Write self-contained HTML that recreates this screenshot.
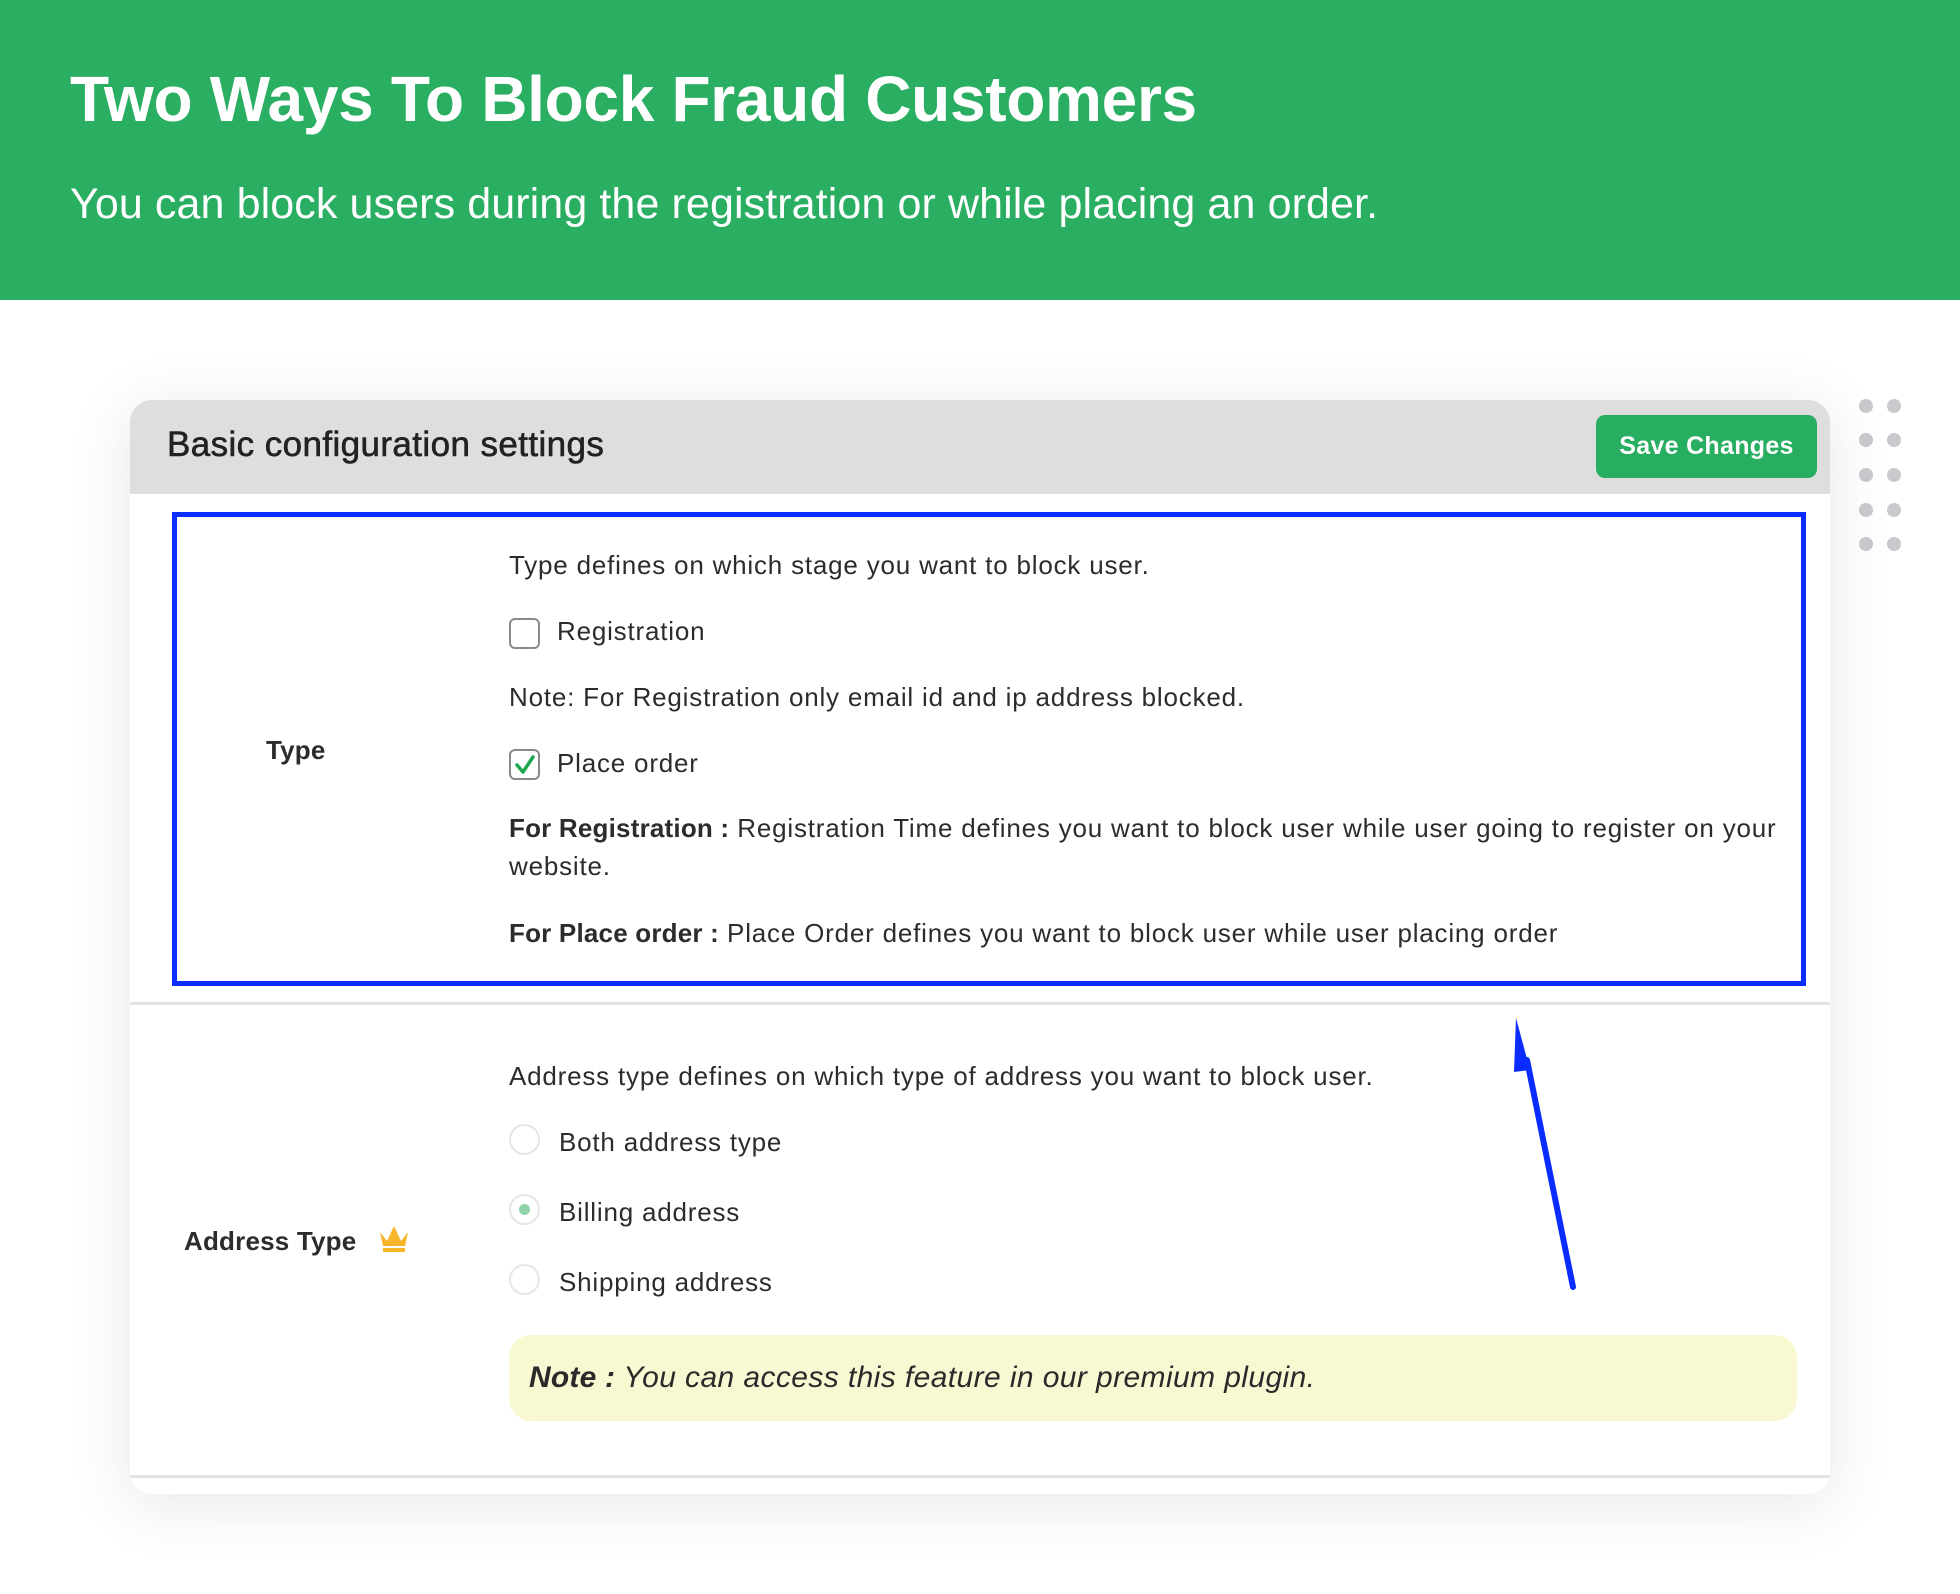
<!DOCTYPE html>
<html><head><meta charset="utf-8"><style>
*{margin:0;padding:0;box-sizing:border-box}
body{width:1960px;height:1594px;background:#fff;position:relative;overflow:hidden;font-family:"Liberation Sans",sans-serif;color:#2c2c2c}
.hdr{position:absolute;left:0;top:0;width:1960px;height:300px;background:#29ae62}
.h1{position:absolute;left:70px;top:62px;font-size:64px;font-weight:bold;color:#fff;letter-spacing:-0.3px;white-space:nowrap}
.h2{position:absolute;left:70px;top:180px;font-size:43px;color:#fff;white-space:nowrap;letter-spacing:0.1px}
.card{position:absolute;left:130px;top:400px;width:1700px;height:1094px;background:#fff;border-radius:22px;box-shadow:0 10px 60px rgba(60,70,100,0.13);overflow:hidden}
.chead{position:absolute;left:0;top:0;width:1700px;height:94px;background:#dedede}
.ctitle{position:absolute;left:37px;top:25px;font-size:35px;color:#222;white-space:nowrap;-webkit-text-stroke:0.6px #222;letter-spacing:0.4px}
.btn{position:absolute;left:1466px;top:15px;width:221px;height:63px;background:#28ae60;border-radius:9px;color:#fff;font-weight:bold;font-size:25px;text-align:center;line-height:63px;letter-spacing:0.3px}
.t{position:absolute;font-size:26px;letter-spacing:0.8px;white-space:nowrap;color:#2c2c2c}
.b{font-weight:bold;letter-spacing:0.2px}
.blue{position:absolute;left:172px;top:512px;width:1634px;height:474px;border:5px solid #0a2cff}
.cb{position:absolute;width:31px;height:31px;border:2px solid #8a8a8a;border-radius:6px;background:#fff}
.rd{position:absolute;width:31px;height:31px;border:2px solid #e6e6e6;border-radius:50%;background:#fff}
.line{position:absolute;left:130px;width:1700px;height:3px;background:#e2e2e2}
.note{position:absolute;left:509px;top:1335px;width:1288px;height:86px;background:#f8f9d2;border-radius:22px}
.dot{position:absolute;width:14px;height:14px;border-radius:50%;background:#c9cace}
</style></head><body>
<div class="hdr"></div>
<div class="h1">Two Ways To Block Fraud Customers</div>
<div class="h2">You can block users during the registration or while placing an order.</div>

<div class="dot" style="left:1859px;top:399px"></div><div class="dot" style="left:1887px;top:399px"></div>
<div class="dot" style="left:1859px;top:433px"></div><div class="dot" style="left:1887px;top:433px"></div>
<div class="dot" style="left:1859px;top:468px"></div><div class="dot" style="left:1887px;top:468px"></div>
<div class="dot" style="left:1859px;top:503px"></div><div class="dot" style="left:1887px;top:503px"></div>
<div class="dot" style="left:1859px;top:537px"></div><div class="dot" style="left:1887px;top:537px"></div>

<div class="card">
 <div class="chead"><div class="ctitle">Basic configuration settings</div><div class="btn">Save Changes</div></div>
</div>
<div class="blue"></div>
<div class="t b" style="left:266px;top:735px">Type</div>
<div class="t" style="left:509px;top:550px">Type defines on which stage you want to block user.</div>
<div class="cb" style="left:509px;top:618px"></div>
<div class="t" style="left:557px;top:616px">Registration</div>
<div class="t" style="left:509px;top:682px">Note: For Registration only email id and ip address blocked.</div>
<div class="cb" style="left:509px;top:749px"></div>
<svg style="position:absolute;left:512px;top:752px" width="26" height="26" viewBox="0 0 26 26"><path d="M5 13 L11 20 L21 5" fill="none" stroke="#1da84f" stroke-width="3.5" stroke-linecap="round" stroke-linejoin="round"/></svg>
<div class="t" style="left:557px;top:748px">Place order</div>
<div class="t" style="left:509px;top:813px"><span class="b">For Registration :</span> Registration Time defines you want to block user while user going to register on your</div>
<div class="t" style="left:509px;top:851px">website.</div>
<div class="t" style="left:509px;top:918px"><span class="b">For Place order :</span> Place Order defines you want to block user while user placing order</div>

<div class="line" style="top:1002px"></div>

<div class="t" style="left:509px;top:1061px">Address type defines on which type of address you want to block user.</div>
<div class="rd" style="left:509px;top:1124px"></div>
<div class="t" style="left:559px;top:1127px">Both address type</div>
<div class="rd" style="left:509px;top:1194px"></div>
<div style="position:absolute;left:519px;top:1204px;width:11px;height:11px;border-radius:50%;background:#8fd3a9"></div>
<div class="t" style="left:559px;top:1197px">Billing address</div>
<div class="rd" style="left:509px;top:1264px"></div>
<div class="t" style="left:559px;top:1267px">Shipping address</div>
<div class="t b" style="left:184px;top:1226px">Address Type</div>
<svg style="position:absolute;left:377px;top:1223px" width="34" height="30" viewBox="0 0 34 30"><path d="M3 9 L10 18 L17 3 L24 18 L31 9 L28 23 L6 23 Z" fill="#f7b52b"/><rect x="6" y="25" width="22" height="4" fill="#f7b52b"/></svg>

<div class="note"></div>
<div class="t" style="left:529px;top:1361px;font-size:30px;letter-spacing:0.4px;font-style:italic;color:#2a2a2a"><span class="b">Note :</span> You can access this feature in our premium plugin.</div>

<div class="line" style="top:1475px"></div>

<svg style="position:absolute;left:0;top:0" width="1960" height="1594"><line x1="1573" y1="1287" x2="1527" y2="1060" stroke="#0a2cff" stroke-width="6" stroke-linecap="round"/><polygon points="1516,1018 1530,1070 1514,1072" fill="#0a2cff"/></svg>
</body></html>
